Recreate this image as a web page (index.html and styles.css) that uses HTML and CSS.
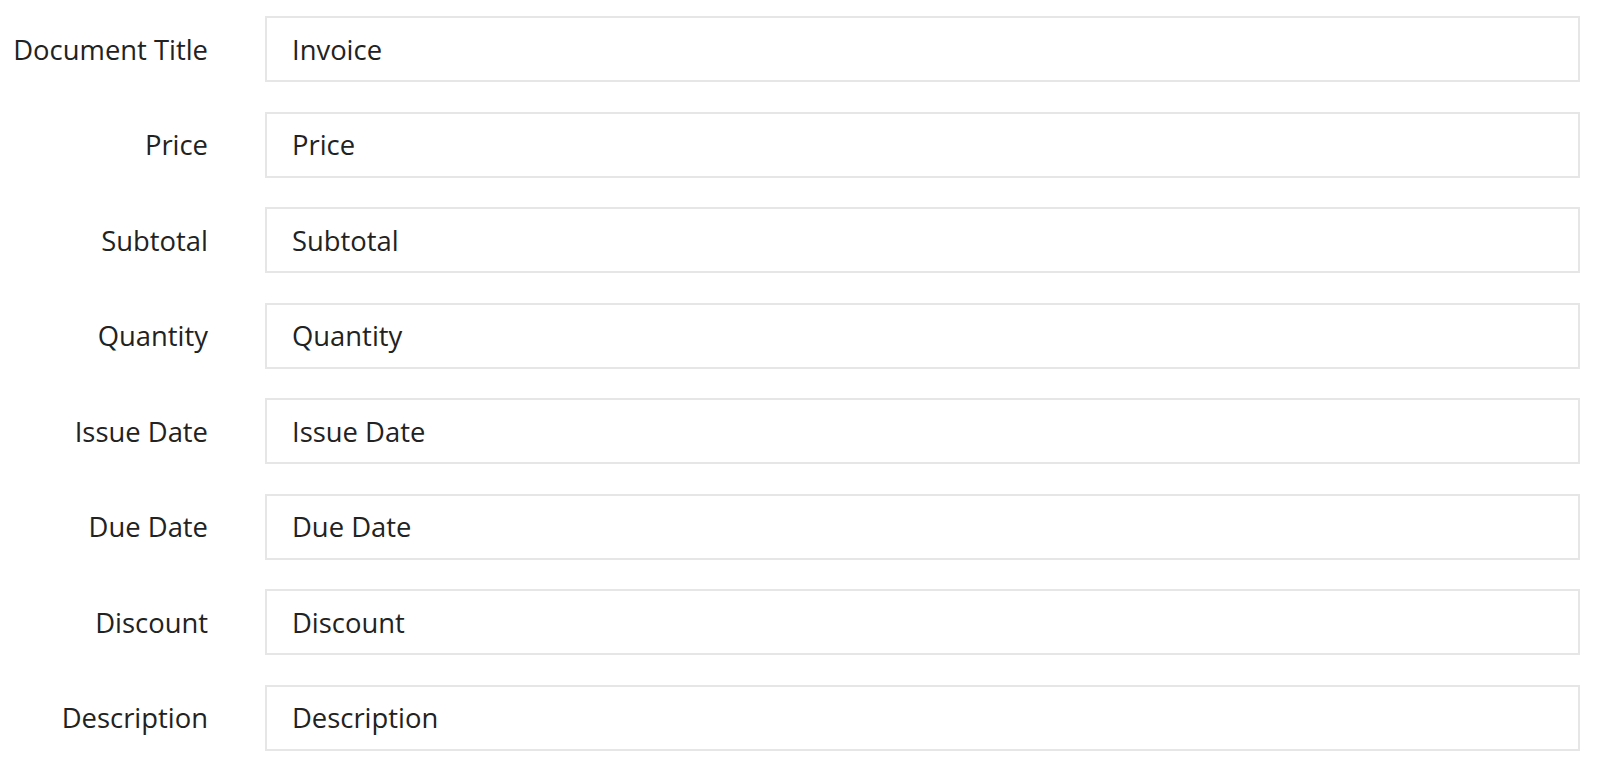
FILE: index.html
```html
<!DOCTYPE html>
<html>
<head>
<meta charset="utf-8">
<link rel="stylesheet" href="styles.css">
</head>
<body>
<form class="form">
  <div class="row"><label class="label">Document Title</label><input class="field" type="text" value="Invoice"></div>
  <div class="row"><label class="label">Price</label><input class="field" type="text" value="Price"></div>
  <div class="row"><label class="label">Subtotal</label><input class="field" type="text" value="Subtotal"></div>
  <div class="row"><label class="label">Quantity</label><input class="field" type="text" value="Quantity"></div>
  <div class="row"><label class="label">Issue Date</label><input class="field" type="text" value="Issue Date"></div>
  <div class="row"><label class="label">Due Date</label><input class="field" type="text" value="Due Date"></div>
  <div class="row"><label class="label">Discount</label><input class="field" type="text" value="Discount"></div>
  <div class="row"><label class="label">Description</label><input class="field" type="text" value="Description"></div>
</form>
</body>
</html>
```

FILE: styles.css
```css
html, body {
  margin: 0;
  padding: 0;
  background: #ffffff;
}
body {
  font-family: "Open Sans", "Liberation Sans", sans-serif;
  color: #2b2b2b;
}
.form {
  display: flex;
  flex-direction: column;
  gap: 29.5px;
  padding: 16px 20px 0 0;
}
.row {
  display: flex;
  align-items: center;
  gap: 57px;
}
.label {
  width: 208px;
  flex: none;
  text-align: right;
  font-size: 27.4px;
  color: #222222;
}
.field {
  flex: 1;
  height: 66px;
  box-sizing: border-box;
  border: 2px solid #e6e6e6;
  border-radius: 0;
  padding: 0 25px;
  font-family: "Open Sans", "Liberation Sans", sans-serif;
  font-size: 27.4px;
  color: #222222;
  background: #fff;
  outline: none;
  margin: 0;
}
```
